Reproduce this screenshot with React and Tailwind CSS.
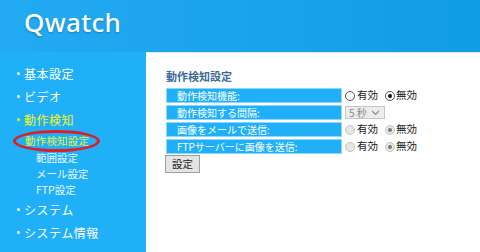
import React from 'react';

const JP = { fontFamily: '"Noto Sans CJK JP", "Noto Sans", sans-serif' };

const MENU_TOP = ['基本設定', 'ビデオ'];
const SUB_ITEMS = ['範囲設定', 'メール設定', 'FTP設定'];
const MENU_BOTTOM = ['システム', 'システム情報'];

const Radio = ({ checked = false, disabled = false }) => (
  <span
    className={
      'w-[10px] h-[10px] rounded-full border flex items-center justify-center ' +
      (disabled ? 'border-[#c4c4c4] bg-[#e6e6e6]' : 'border-[#555] bg-white')
    }
  >
    {checked && (
      <span className={'w-[4px] h-[4px] rounded-full ' + (disabled ? 'bg-[#7a7a7a]' : 'bg-[#111]')} />
    )}
  </span>
);

const RadioPair = ({ disabled = false }) => (
  <div className="flex items-center text-[10.5px] text-[#222] leading-none">
    <Radio disabled={disabled} />
    <span className="ml-[2px] mr-[7px]">有効</span>
    <Radio checked disabled={disabled} />
    <span className="ml-[1px]">無効</span>
  </div>
);

const ROWS = [
  { label: '動作検知機能:', control: <RadioPair /> },
  {
    label: '動作検知する間隔:',
    control: (
      <div className="w-[40px] h-[13px] border border-[#c6c6c6] bg-[#ececec] flex items-center justify-between pl-[3px] pr-[3px] text-[10px] text-[#8a8a8a] leading-none">
        <span>5 秒</span>
        <svg width="9" height="6" viewBox="0 0 9 6" className="mr-[1px]">
          <path d="M1 1l3.5 3.5L8 1" fill="none" stroke="#8a8a8a" strokeWidth="1.2" />
        </svg>
      </div>
    ),
  },
  { label: '画像をメールで送信:', control: <RadioPair disabled /> },
  { label: 'FTPサーバーに画像を送信:', control: <RadioPair disabled /> },
];

// main menu entry with small bullet
const MenuItem = ({ label, active = false }) => (
  <div
    className={
      'h-[23px] text-[12px] pl-[17px] flex items-center ' + (active ? 'text-[#f4f41c]' : 'text-white')
    }
  >
    <span className={'w-[3px] h-[3px] rounded-full mr-[4px] ' + (active ? 'bg-[#f4f41c]' : 'bg-white')} />
    <span className="tracking-[0.5px]">{label}</span>
  </div>
);

export default function App() {
  return (
    <div className="w-[480px] h-[252px] overflow-hidden bg-white flex flex-col" style={JP}>
      {/* Header */}
      <div className="h-[52px] bg-gradient-to-r from-[#22aaf2] to-[#0f9de6] flex items-start pl-[24px] pt-[3px]">
        <span
          className="text-white text-[26px] font-medium tracking-[0.3px] [text-shadow:0_1px_2px_rgba(0,0,0,0.25)]"
          style={{ fontFamily: '"Noto Sans", sans-serif' }}
        >
          Qwatch
        </span>
      </div>

      <div className="flex flex-1">
        {/* Sidebar */}
        <div className="w-[146px] bg-[#1fb0f8] pt-[10px]">
          {MENU_TOP.map((m) => (
            <MenuItem key={m} label={m} />
          ))}
          <MenuItem label="動作検知" active />

          <div className="relative h-[19px] flex items-center pl-[25px] text-[10.5px] text-[#e6f23a] tracking-[0.2px]">
            動作検知設定
            <span className="absolute left-[13px] top-[-1px] w-[87px] h-[22px] rounded-[50%] border-[3px] border-[#e31c24]" />
          </div>
          {SUB_ITEMS.map((s) => (
            <div key={s} className="h-[16px] flex items-center pl-[36px] text-[10.5px] text-[#e8f6ff]">
              {s}
            </div>
          ))}

          {MENU_BOTTOM.map((m) => (
            <MenuItem key={m} label={m} />
          ))}
        </div>

        {/* Content */}
        <div className="flex-1 border-t border-[#d6eefc] pl-[20px] pt-[15px]">
          <div className="text-[11px] font-bold text-[#3d6a99] leading-[16px]">動作検知設定</div>
          <div className="mt-[4px] flex flex-col gap-[2px]">
            {ROWS.map((r) => (
              <div key={r.label} className="flex items-center h-[15px]">
                <div className="w-[176px] h-[15px] bg-[#1fb0f8] border border-[#8fd6fa] flex items-center pl-[10px] text-[10px] text-white leading-none">
                  {r.label}
                </div>
                <div className="pl-[3px] flex items-center">{r.control}</div>
              </div>
            ))}
          </div>
          <button className="mt-[1px] -ml-[1px] w-[35px] h-[18px] bg-[#e4e4e4] border border-[#9e9e9e] text-[10.5px] text-[#222] leading-none flex items-center justify-center">
            設定
          </button>
        </div>
      </div>
    </div>
  );
}
